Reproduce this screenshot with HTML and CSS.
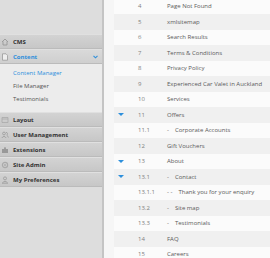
FILE: index.html
```html
<!DOCTYPE html>
<html lang="en">
<head>
  <meta charset="UTF-8">
  <title>Content Manager</title>
  <link rel="stylesheet" href="styles.css">
</head>
<body>
  <aside class="sidebar">
    <ul class="menu">
      <li class="menu-item">
        <svg class="icon" viewBox="0 0 8 8"><path d="M1 4 L4 1 L7 4 M2 3.5 V7 H6 V3.5" fill="none" stroke="#999" stroke-width="0.9"/></svg>
        <span>CMS</span>
      </li>
      <li class="menu-item active">
        <svg class="icon" viewBox="0 0 8 8"><path d="M1.5 0.8 H5 L6.5 2.3 V7.2 H1.5 Z" fill="#eee" stroke="#999" stroke-width="0.8"/></svg>
        <span>Content</span>
        <svg class="chevron" viewBox="0 0 6 4"><path d="M0.6 0.6 L3 3 L5.4 0.6" fill="none" stroke="#2d8fdc" stroke-width="1.3"/></svg>
      </li>
      <li class="submenu">
        <a class="current" href="#">Content Manager</a>
        <a href="#">File Manager</a>
        <a href="#">Testimonials</a>
      </li>
      <li class="menu-item">
        <svg class="icon" viewBox="0 0 8 8"><path d="M1 1.5 H7 V6.5 H1 Z M1 3 H7" fill="none" stroke="#aaa" stroke-width="0.8"/></svg>
        <span>Layout</span>
      </li>
      <li class="menu-item">
        <svg class="icon" viewBox="0 0 8 8"><circle cx="3" cy="2.5" r="1.4" fill="none" stroke="#999" stroke-width="0.8"/><path d="M0.8 7 Q3 3.8 5.2 7 M5 1.5 A1.2 1.2 0 1 1 5.5 4 M6 4.5 Q7.3 5.2 7.4 6.5" fill="none" stroke="#999" stroke-width="0.8"/></svg>
        <span>User Management</span>
      </li>
      <li class="menu-item">
        <svg class="icon" viewBox="0 0 8 8"><path d="M1 3 H3 Q3 1 4 1 Q5 1 5 3 H7 V7 H1 Z" fill="#999"/></svg>
        <span>Extensions</span>
      </li>
      <li class="menu-item">
        <svg class="icon" viewBox="0 0 8 8"><circle cx="4" cy="4" r="2.6" fill="none" stroke="#aaa" stroke-width="1.2"/><circle cx="4" cy="4" r="0.9" fill="#aaa"/></svg>
        <span>Site Admin</span>
      </li>
      <li class="menu-item">
        <svg class="icon" viewBox="0 0 8 8"><circle cx="4" cy="2.4" r="1.5" fill="none" stroke="#999" stroke-width="0.8"/><path d="M1.2 7.2 Q4 3.6 6.8 7.2 Z" fill="none" stroke="#999" stroke-width="0.8"/></svg>
        <span>My Preferences</span>
      </li>
    </ul>
  </aside>
  <main class="content">
    <table class="pages">
      <tr><td class="tog"></td><td class="num">4</td><td>Page Not Found</td></tr>
      <tr><td class="tog"></td><td class="num">5</td><td>xmlsitemap</td></tr>
      <tr><td class="tog"></td><td class="num">6</td><td>Search Results</td></tr>
      <tr><td class="tog"></td><td class="num">7</td><td>Terms &amp; Conditions</td></tr>
      <tr><td class="tog"></td><td class="num">8</td><td>Privacy Policy</td></tr>
      <tr><td class="tog"></td><td class="num">9</td><td>Experienced Car Valet in Auckland</td></tr>
      <tr><td class="tog"></td><td class="num">10</td><td>Services</td></tr>
      <tr><td class="tog"><span class="arrow"></span></td><td class="num">11</td><td>Offers</td></tr>
      <tr><td class="tog"></td><td class="num">11.1</td><td><span class="dash">-</span>Corporate Accounts</td></tr>
      <tr><td class="tog"></td><td class="num">12</td><td>Gift Vouchers</td></tr>
      <tr><td class="tog"><span class="arrow"></span></td><td class="num">13</td><td>About</td></tr>
      <tr><td class="tog"><span class="arrow"></span></td><td class="num">13.1</td><td><span class="dash">-</span>Contact</td></tr>
      <tr><td class="tog"></td><td class="num">13.1.1</td><td><span class="dash">- -</span>Thank you for your enquiry</td></tr>
      <tr><td class="tog"></td><td class="num">13.2</td><td><span class="dash">-</span>Site map</td></tr>
      <tr><td class="tog"></td><td class="num">13.3</td><td><span class="dash">-</span>Testimonials</td></tr>
      <tr><td class="tog"></td><td class="num">14</td><td>FAQ</td></tr>
      <tr><td class="tog"></td><td class="num">15</td><td>Careers</td></tr>
    </table>
  </main>
</body>
</html>
```
FILE: styles.css
```css
* { margin: 0; padding: 0; box-sizing: border-box; }
body {
  font-family: 'Open Sans', sans-serif;
  display: flex;
  height: 258px;
  overflow: hidden;
  background: #f6f6f6;
  color: #555;
}
/* Menu lateral */
.sidebar {
  width: 104px;
  flex-shrink: 0;
  background: #dddddd;
  border-right: 2px solid #c4c4c4;
  padding-top: 34px;
}
.menu { list-style: none; }
.menu-item {
  display: flex;
  align-items: center;
  height: 15px;
  padding-left: 1px;
  background: linear-gradient(#d3d3d3, #c7c7c7);
  border-top: 1px solid #e0e0e0;
  border-bottom: 1px solid #bbbbbb;
  font-size: 6px;
  font-weight: bold;
  color: #333;
}
.menu-item .icon { width: 8px; height: 8px; margin-right: 4px; }
.menu-item.active {
  background: linear-gradient(#d9d9d9, #cfcfcf);
  color: #2d8fdc;
}
.chevron { width: 5px; height: 4px; margin-left: auto; margin-right: 4px; }
.submenu {
  display: flex;
  flex-direction: column;
  background: #ececec;
  padding: 3px 0 6px 13px;
}
.submenu a {
  line-height: 13px;
  font-size: 6px;
  color: #555;
  text-decoration: none;
}
.submenu a.current { color: #2d8fdc; }
/* Tabla de paginas */
.content {
  flex: 1;
  padding-left: 10px;
  background: #f6f6f6;
}
.pages {
  width: 100%;
  border-collapse: collapse;
  margin-top: -1.5px;
  font-size: 6px;
  color: #5a5a5a;
}
.pages tr { height: 15.5px; }
.pages tr:nth-child(odd) { background: #fbfbfb; }
.pages tr:nth-child(even) { background: #f0f0f0; }
.pages td { padding: 0; white-space: nowrap; }
.pages td.tog { width: 20px; padding-left: 4px; }
.pages td.num { width: 29px; padding-left: 4px; color: #808080; }
.pages td:last-child { padding-left: 4px; }
.dash { margin-right: 6px; }
.arrow {
  display: block;
  width: 0;
  height: 0;
  border-left: 3px solid transparent;
  border-right: 3px solid transparent;
  border-top: 3px solid #2d8fdc;
}
```
